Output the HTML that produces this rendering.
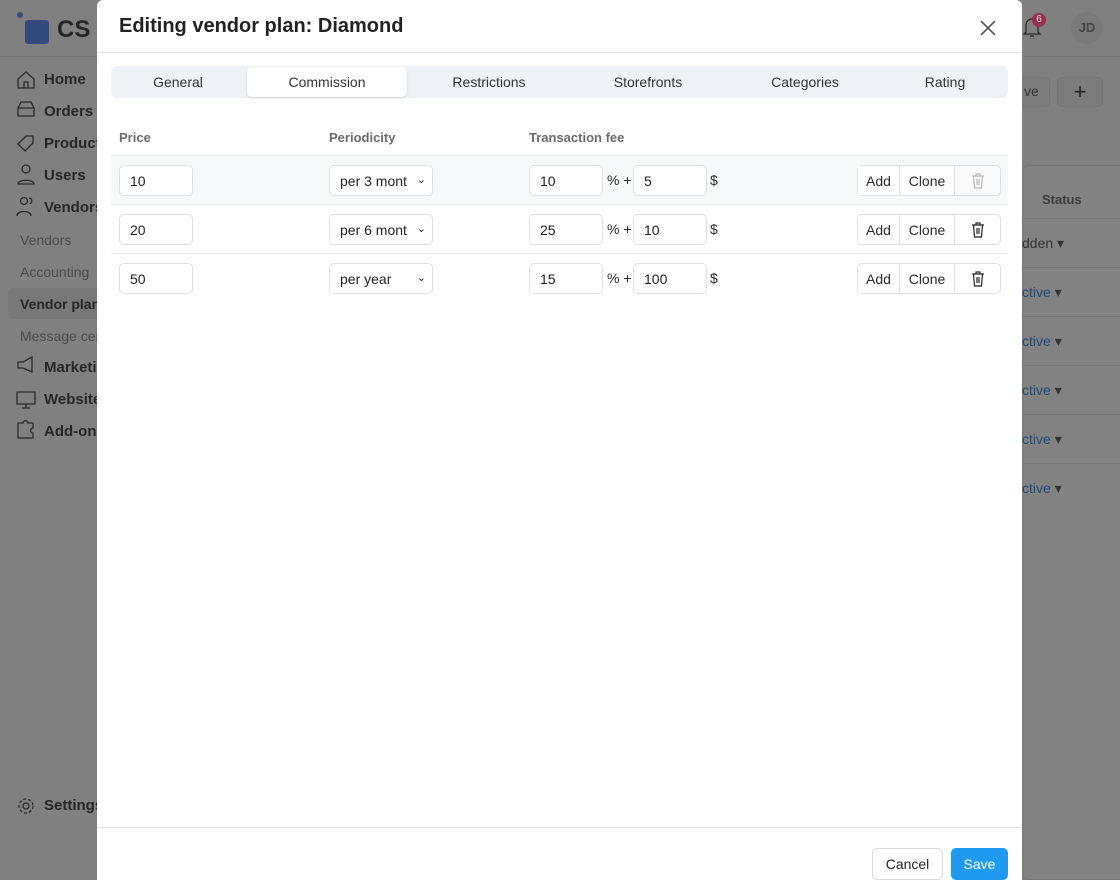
<!DOCTYPE html>
<html><head><meta charset="utf-8"><style>
*{box-sizing:border-box;margin:0;padding:0}
body{width:1120px;height:880px;overflow:hidden;position:relative;font-family:"Liberation Sans",sans-serif;background:#808080;color:#2b2b2b}
.a{position:absolute}
.nav{font-size:15px;font-weight:bold;color:#262626}
.sub{font-size:14px;color:#4a4a4a}
.modal{position:absolute;left:97px;top:0;width:925px;height:880px;background:#fff;border-radius:6px 6px 0 0}
.inp{position:absolute;height:31px;border:1px solid #dcdfe3;border-radius:5px;background:#fff;font-size:14px;padding:7px 10px;color:#222}
.lbl{position:absolute;top:130px;font-size:13px;color:#6b6b6b;font-weight:bold}
.tab{position:absolute;top:74px;font-size:14px;color:#333;transform:translateX(-50%)}
.bg{position:absolute;left:760px;height:31px;width:144px;border:1px solid #dcdfe3;border-radius:5px;background:#fff;display:flex;font-size:14px}
.bg div{display:flex;align-items:center;justify-content:center;border-right:1px solid #dcdfe3}
</style></head><body>
<div class="a" style="left:17px;top:12px;width:6px;height:6px;border-radius:3px;background:#3a4a80"></div>
<div class="a" style="left:25px;top:20px;width:24px;height:24px;border-radius:3px;background:#33487e"></div>
<div class="a" style="left:57px;top:16px;font-size:24px;font-weight:bold;color:#262626">CS</div>
<div class="a" style="left:0;top:56px;width:97px;height:1px;background:#757575"></div>
<svg class="a" style="left:16px;top:70px" width="20" height="760" fill="none" stroke="#2a2a2a" stroke-width="1.3">
<path d="M2 9l8-7 8 7v9H2z M8 18v-6h4v6"/>
<path d="M2 38h16v8H2z M2 38l3-6h10l3 6"/>
<path d="M2 74l8-8h7v7l-8 8z"/>
<circle cx="10" cy="99" r="4"/><path d="M2 114c0-5 16-5 16 0z"/>
<circle cx="8" cy="131" r="3.5"/><path d="M1 146c0-6 14-6 14 0 M13 128c3 0 4 4 1 6"/>
<path d="M2 292h5l9-5v15l-9-4H2z"/>
<path d="M1 322h18v12H1z M10 334v4 M6 338h8"/>
<path d="M2 353h5c0-3 5-3 5 0h5v5c-3 0-3 5 0 5v5H2z"/>
<circle cx="10" cy="736" r="3"/><circle cx="10" cy="736" r="7" stroke-dasharray="3 2"/>
</svg>
<div class="a nav" style="left:44px;top:71px">Home</div>
<div class="a nav" style="left:44px;top:103px">Orders</div>
<div class="a nav" style="left:44px;top:135px">Products</div>
<div class="a nav" style="left:44px;top:167px">Users</div>
<div class="a nav" style="left:44px;top:199px">Vendors</div>
<div class="a sub" style="left:20px;top:232px">Vendors</div>
<div class="a sub" style="left:20px;top:264px">Accounting</div>
<div class="a" style="left:8px;top:288px;width:95px;height:31px;background:#787878;border-radius:5px"></div>
<div class="a nav" style="left:20px;top:296px;font-size:14px">Vendor plans</div>
<div class="a sub" style="left:20px;top:328px">Message center</div>
<div class="a nav" style="left:44px;top:359px">Marketing</div>
<div class="a nav" style="left:44px;top:391px">Website</div>
<div class="a nav" style="left:44px;top:423px">Add-ons</div>
<div class="a nav" style="left:44px;top:797px">Settings</div>
<div class="a" style="left:1024px;top:56px;width:96px;height:1px;background:#757575"></div>
<svg class="a" style="left:1022px;top:16px" width="20" height="22" fill="none" stroke="#2a2a2a" stroke-width="1.3"><path d="M4 16V9a6 6 0 0 1 12 0v7l2 2H2z M8 20h4"/></svg>
<div class="a" style="left:1032px;top:13px;width:14px;height:14px;border-radius:7px;background:#9a3050;color:#ddd;font-size:10px;text-align:center;line-height:14px">6</div>
<div class="a" style="left:1071px;top:12px;width:32px;height:32px;border-radius:16px;background:#7a7a7a;color:#444;font-size:13px;font-weight:bold;text-align:center;line-height:32px">JD</div>
<div class="a" style="left:1010px;top:77px;width:40px;height:30px;border-radius:5px;background:#7c7c7c;border:1px solid #767676"></div>
<div class="a" style="left:1024px;top:83px;font-size:14px;color:#333">ve</div>
<div class="a" style="left:1057px;top:77px;width:46px;height:30px;border-radius:5px;background:#7c7c7c;border:1px solid #767676;text-align:center;font-size:22px;line-height:28px;color:#222">+</div>
<div class="a" style="left:1022px;top:165px;width:121px;height:715px;background:#828282;border:1px solid #767676;border-radius:6px"></div>
<div class="a" style="left:1042px;top:192px;font-size:13px;font-weight:bold;color:#3c3c3c">Status</div>
<div class="a" style="left:1022px;top:218px;width:106px;height:1px;background:#767676"></div>
<div class="a" style="left:1022px;top:235px;font-size:14px;color:#333">dden ▾</div>
<div class="a" style="left:1022px;top:267px;width:106px;height:1px;background:#767676"></div>
<div class="a" style="left:1022px;top:284px;font-size:14px;color:#1e4a7a">ctive <span style="color:#333">▾</span></div>
<div class="a" style="left:1022px;top:316px;width:106px;height:1px;background:#767676"></div>
<div class="a" style="left:1022px;top:333px;font-size:14px;color:#1e4a7a">ctive <span style="color:#333">▾</span></div>
<div class="a" style="left:1022px;top:365px;width:106px;height:1px;background:#767676"></div>
<div class="a" style="left:1022px;top:382px;font-size:14px;color:#1e4a7a">ctive <span style="color:#333">▾</span></div>
<div class="a" style="left:1022px;top:414px;width:106px;height:1px;background:#767676"></div>
<div class="a" style="left:1022px;top:431px;font-size:14px;color:#1e4a7a">ctive <span style="color:#333">▾</span></div>
<div class="a" style="left:1022px;top:463px;width:106px;height:1px;background:#767676"></div>
<div class="a" style="left:1022px;top:480px;font-size:14px;color:#1e4a7a">ctive <span style="color:#333">▾</span></div>

<div class="modal">
<div class="a" style="left:22px;top:15px;font-size:20px;font-weight:bold;color:#222">Editing vendor plan: Diamond</div>
<svg class="a" style="left:882px;top:19px" width="18" height="18" stroke="#555" stroke-width="1.6"><path d="M2 2l14 14M16 2L2 16"/></svg>
<div class="a" style="left:0;top:52px;width:925px;height:1px;background:#e3e3e3"></div>
<div class="a" style="left:14px;top:66px;width:897px;height:32px;background:#eef2f7;border-radius:6px"></div>
<div class="a" style="left:150px;top:67px;width:160px;height:30px;background:#fff;border-radius:5px;box-shadow:0 1px 2px rgba(0,0,0,.15)"></div>
<div class="tab" style="left:81px">General</div>
<div class="tab" style="left:230px">Commission</div>
<div class="tab" style="left:392px">Restrictions</div>
<div class="tab" style="left:551px">Storefronts</div>
<div class="tab" style="left:708px">Categories</div>
<div class="tab" style="left:848px">Rating</div>
<div class="lbl" style="left:22px">Price</div>
<div class="lbl" style="left:232px">Periodicity</div>
<div class="lbl" style="left:432px">Transaction fee</div>
<div class="a" style="left:14px;top:155px;width:897px;height:49px;background:#f6f8fa"></div>
<div class="a" style="left:14px;top:155px;width:897px;height:1px;background:#e3e6ea"></div>
<div class="a" style="left:14px;top:204px;width:897px;height:1px;background:#e3e6ea"></div>
<div class="a" style="left:14px;top:253px;width:897px;height:1px;background:#e3e6ea"></div>

<div class="inp" style="left:22px;top:165px;width:74px">10</div>
<div class="inp" style="left:232px;top:165px;width:104px">per 3 mont <span style="position:absolute;right:6px;font-size:11px">&#8964;</span></div>
<div class="inp" style="left:432px;top:165px;width:74px">10</div>
<div class="a" style="left:510px;top:172px;font-size:14px">% +</div>
<div class="inp" style="left:536px;top:165px;width:74px">5</div>
<div class="a" style="left:613px;top:172px;font-size:14px">$</div>
<div class="bg" style="top:165px;background:#fafafa"><div style="width:42px;background:#fff">Add</div><div style="width:55px;background:#fff">Clone</div><div style="flex:1;border:0"><svg width="14" height="16" fill="none" stroke="#bbb" stroke-width="1.2"><path d="M1 3h12M5 3V1h4v2M2.5 3l1 12h7l1-12M6 6v6M8 6v6"/></svg></div></div>

<div class="inp" style="left:22px;top:214px;width:74px">20</div>
<div class="inp" style="left:232px;top:214px;width:104px">per 6 mont <span style="position:absolute;right:6px;font-size:11px">&#8964;</span></div>
<div class="inp" style="left:432px;top:214px;width:74px">25</div>
<div class="a" style="left:510px;top:221px;font-size:14px">% +</div>
<div class="inp" style="left:536px;top:214px;width:74px">10</div>
<div class="a" style="left:613px;top:221px;font-size:14px">$</div>
<div class="bg" style="top:214px"><div style="width:42px">Add</div><div style="width:55px">Clone</div><div style="flex:1;border:0"><svg width="14" height="16" fill="none" stroke="#222" stroke-width="1.2"><path d="M1 3h12M5 3V1h4v2M2.5 3l1 12h7l1-12M6 6v6M8 6v6"/></svg></div></div>

<div class="inp" style="left:22px;top:263px;width:74px">50</div>
<div class="inp" style="left:232px;top:263px;width:104px">per year <span style="position:absolute;right:6px;font-size:11px">&#8964;</span></div>
<div class="inp" style="left:432px;top:263px;width:74px">15</div>
<div class="a" style="left:510px;top:270px;font-size:14px">% +</div>
<div class="inp" style="left:536px;top:263px;width:74px">100</div>
<div class="a" style="left:613px;top:270px;font-size:14px">$</div>
<div class="bg" style="top:263px"><div style="width:42px">Add</div><div style="width:55px">Clone</div><div style="flex:1;border:0"><svg width="14" height="16" fill="none" stroke="#222" stroke-width="1.2"><path d="M1 3h12M5 3V1h4v2M2.5 3l1 12h7l1-12M6 6v6M8 6v6"/></svg></div></div>

<div class="a" style="left:0;top:827px;width:925px;height:1px;background:#e3e3e3"></div>
<div class="a" style="left:775px;top:848px;width:71px;height:32px;border:1px solid #d5d8dc;border-radius:5px;font-size:14px;text-align:center;line-height:30px;color:#222">Cancel</div>
<div class="a" style="left:854px;top:848px;width:57px;height:32px;background:#1e9bf0;border-radius:5px;font-size:14px;text-align:center;line-height:32px;color:#fff">Save</div>
</div>
</body></html>
